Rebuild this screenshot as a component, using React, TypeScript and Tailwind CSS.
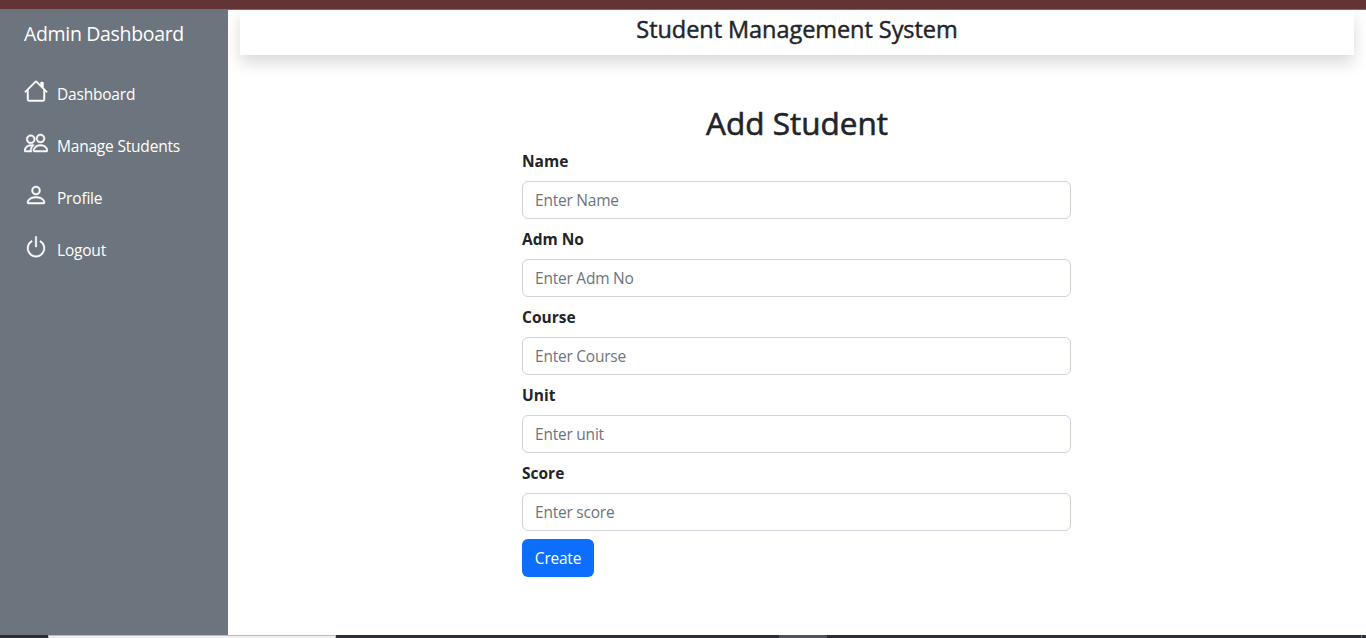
import type { ReactNode } from 'react';
import { BsHouse, BsPeople, BsPerson, BsPower } from 'react-icons/bs';

const fields = [
  { id: 'name', label: 'Name', placeholder: 'Enter Name' },
  { id: 'adm', label: 'Adm No', placeholder: 'Enter Adm No' },
  { id: 'course', label: 'Course', placeholder: 'Enter Course' },
  { id: 'unit', label: 'Unit', placeholder: 'Enter unit' },
  { id: 'score', label: 'Score', placeholder: 'Enter score' },
];

function NavItem({ icon, children }: { icon: ReactNode; children: ReactNode }) {
  return (
    <li className="flex h-[52px] items-start pt-2">
      <span className="mr-2 block size-6 text-2xl">{icon}</span>
      <span className="mt-[3px] ml-px text-[15.5px] leading-6 tracking-[-0.2px]">{children}</span>
    </li>
  );
}

export default function App() {
  return (
    <div className="flex h-[638px] w-[1366px] flex-col overflow-hidden bg-white font-['Open_Sans','Noto_Sans',sans-serif] text-[15.5px] text-[#212529]">
      <div className="z-10 h-[10px] shrink-0 border-b border-[#8b6265] bg-[#633436]" />
      <div className="flex h-[625px] shrink-0 overflow-hidden">
        <aside className="w-[228px] shrink-0 bg-[#6c757d] px-6 text-white">
          <div className="pt-[9px] text-[19.5px] leading-[30px] tracking-[-0.33px]">Admin Dashboard</div>
          <ul className="mt-[22px]">
            <NavItem icon={<BsHouse strokeWidth={0.3} />}>Dashboard</NavItem>
            <NavItem icon={<BsPeople strokeWidth={0.3} />}>Manage Students</NavItem>
            <NavItem icon={<BsPerson strokeWidth={0.3} />}>Profile</NavItem>
            <NavItem icon={<BsPower strokeWidth={0.3} />}>Logout</NavItem>
          </ul>
        </aside>
        <main className="flex flex-1 flex-col overflow-hidden px-3">
          <header className="flex h-[45px] justify-center pt-[5px] shadow-[0_8px_16px_rgba(0,0,0,0.15)]">
            <h4 className="text-[23.5px] leading-[29px] tracking-[-0.06px] [-webkit-text-stroke:0.45px_currentColor]">Student Management System</h4>
          </header>
          <form className="mt-[49px] ml-[282px] w-[549px]">
            <h2 className="pl-px text-center text-[31.5px] leading-[38px] [-webkit-text-stroke:0.6px_currentColor]">Add Student</h2>
            <div className="mt-[7px] flex flex-col gap-2">
              {fields.map((field) => (
                <div key={field.id}>
                  <label htmlFor={field.id} className="mb-2 block leading-6 font-bold">{field.label}</label>
                  <input
                    id={field.id}
                    placeholder={field.placeholder}
                    className="block h-[38px] w-full rounded-md border border-[#ced4da] bg-white px-3 py-1.5 leading-6 tracking-[-0.23px] placeholder:text-[#6c757d]"
                  />
                </div>
              ))}
            </div>
            <button type="button" className="mt-2 h-[38px] w-[72px] rounded-md bg-[#0d6efd] text-center leading-6 tracking-[-0.23px] text-white">Create</button>
          </form>
        </main>
      </div>
      <div className="flex h-[3px] shrink-0 bg-[#2a2d33]">
        <div className="ml-12 w-72 border-x border-t border-[#bbbbbb] bg-[#f0f0f0]" />
        <div className="ml-[443px] w-12 bg-[#50535a]" />
        <div className="ml-[534px] w-px bg-[#777777]" />
      </div>
    </div>
  );
}
